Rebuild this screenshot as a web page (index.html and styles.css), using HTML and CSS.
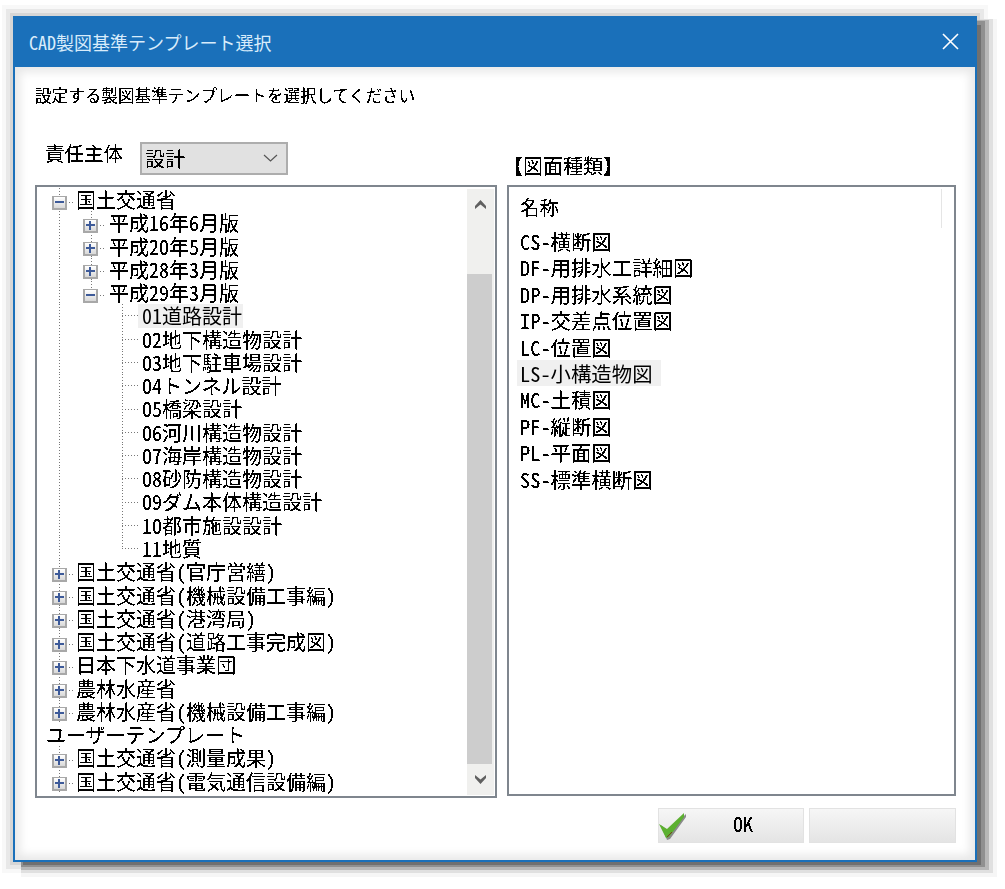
FILE: index.html
```html
<!DOCTYPE html>
<html lang="ja">
<head>
<meta charset="utf-8">
<title>CAD製図基準テンプレート選択</title>
<link rel="stylesheet" href="styles.css">
</head>
<body>
<svg class="defs" width="0" height="0" aria-hidden="true">
  <filter id="crisp" x="0" y="0" width="100%" height="100%" color-interpolation-filters="sRGB">
    <feComponentTransfer>
      <feFuncA type="discrete" tableValues="0 0 1 1 1"/>
    </feComponentTransfer>
  </filter>
</svg>
<div class="dialog">
  <header class="titlebar">
    <span class="title">CAD製図基準テンプレート選択</span>
    <svg class="close" width="17" height="17" viewBox="0 0 17 17"><path d="M1 1L16 16M16 1L1 16" stroke="#fff" stroke-width="1.6" fill="none"/></svg>
  </header>
  <main class="body">
    <p class="prompt crisp">設定する製図基準テンプレートを選択してください</p>
    <div class="columns">
      <section class="col">
        <div class="owner">
          <span class="owner-label crisp">責任主体</span>
          <div class="combo">
            <span class="crisp">設計</span>
            <svg width="15" height="8" viewBox="0 0 15 8"><path d="M1 1L7.5 7L14 1" stroke="#555" stroke-width="1.2" fill="none"/></svg>
          </div>
        </div>
        <div class="tree">
          <div class="tree-rows crisp-rows">
            <div class="row"><span class="cell root"><i class="box minus"></i></span><span class="txt">国土交通省</span></div>
            <div class="row"><span class="cell guide"></span><span class="cell sub"><i class="box plus"></i></span><span class="txt">平成16年6月版</span></div>
            <div class="row"><span class="cell guide"></span><span class="cell sub"><i class="box plus"></i></span><span class="txt">平成20年5月版</span></div>
            <div class="row"><span class="cell guide"></span><span class="cell sub"><i class="box plus"></i></span><span class="txt">平成28年3月版</span></div>
            <div class="row"><span class="cell guide"></span><span class="cell sub sub-last"><i class="box minus"></i></span><span class="txt">平成29年3月版</span></div>
            <div class="row"><span class="cell guide"></span><span class="cell blank"></span><span class="cell leaf"></span><span class="txt sel">01道路設計</span></div>
            <div class="row"><span class="cell guide"></span><span class="cell blank"></span><span class="cell leaf"></span><span class="txt">02地下構造物設計</span></div>
            <div class="row"><span class="cell guide"></span><span class="cell blank"></span><span class="cell leaf"></span><span class="txt">03地下駐車場設計</span></div>
            <div class="row"><span class="cell guide"></span><span class="cell blank"></span><span class="cell leaf"></span><span class="txt">04トンネル設計</span></div>
            <div class="row"><span class="cell guide"></span><span class="cell blank"></span><span class="cell leaf"></span><span class="txt">05橋梁設計</span></div>
            <div class="row"><span class="cell guide"></span><span class="cell blank"></span><span class="cell leaf"></span><span class="txt">06河川構造物設計</span></div>
            <div class="row"><span class="cell guide"></span><span class="cell blank"></span><span class="cell leaf"></span><span class="txt">07海岸構造物設計</span></div>
            <div class="row"><span class="cell guide"></span><span class="cell blank"></span><span class="cell leaf"></span><span class="txt">08砂防構造物設計</span></div>
            <div class="row"><span class="cell guide"></span><span class="cell blank"></span><span class="cell leaf"></span><span class="txt">09ダム本体構造設計</span></div>
            <div class="row"><span class="cell guide"></span><span class="cell blank"></span><span class="cell leaf"></span><span class="txt">10都市施設設計</span></div>
            <div class="row"><span class="cell guide"></span><span class="cell blank"></span><span class="cell leaf leaf-last"></span><span class="txt">11地質</span></div>
            <div class="row"><span class="cell root"><i class="box plus"></i></span><span class="txt">国土交通省（官庁営繕）</span></div>
            <div class="row"><span class="cell root"><i class="box plus"></i></span><span class="txt">国土交通省（機械設備工事編）</span></div>
            <div class="row"><span class="cell root"><i class="box plus"></i></span><span class="txt">国土交通省（港湾局）</span></div>
            <div class="row"><span class="cell root"><i class="box plus"></i></span><span class="txt">国土交通省（道路工事完成図）</span></div>
            <div class="row"><span class="cell root"><i class="box plus"></i></span><span class="txt">日本下水道事業団</span></div>
            <div class="row"><span class="cell root"><i class="box plus"></i></span><span class="txt">農林水産省</span></div>
            <div class="row"><span class="cell root"><i class="box plus"></i></span><span class="txt">農林水産省（機械設備工事編）</span></div>
            <div class="row"><span class="txt user">ユーザーテンプレート</span></div>
            <div class="row"><span class="cell root"><i class="box plus"></i></span><span class="txt">国土交通省（測量成果）</span></div>
            <div class="row"><span class="cell root"><i class="box plus"></i></span><span class="txt">国土交通省（電気通信設備編）</span></div>
          </div>
          <div class="scrollbar">
            <svg class="arrow" width="13" height="11" viewBox="0 0 13 11"><path d="M6.5 1L12 7L12 10L6.5 5.5L1 10L1 7Z" fill="#606060"/></svg>
            <div class="thumb"></div>
            <svg class="arrow" width="13" height="11" viewBox="0 0 13 11"><path d="M6.5 10L12 4L12 1L6.5 5.5L1 1L1 4Z" fill="#606060"/></svg>
          </div>
        </div>
      </section>
      <section class="col right">
        <div class="list-label crisp">【図面種類】</div>
        <div class="list">
          <div class="list-head"><span class="crisp">名称</span></div>
          <div class="items crisp-rows">
            <div class="item"><span class="txt">CS-横断図</span></div>
            <div class="item"><span class="txt">DF-用排水工詳細図</span></div>
            <div class="item"><span class="txt">DP-用排水系統図</span></div>
            <div class="item"><span class="txt">IP-交差点位置図</span></div>
            <div class="item"><span class="txt">LC-位置図</span></div>
            <div class="item"><span class="txt sel">LS-小構造物図</span></div>
            <div class="item"><span class="txt">MC-土積図</span></div>
            <div class="item"><span class="txt">PF-縦断図</span></div>
            <div class="item"><span class="txt">PL-平面図</span></div>
            <div class="item"><span class="txt">SS-標準横断図</span></div>
          </div>
        </div>
      </section>
    </div>
    <footer class="buttons">
      <div class="btn ok">
        <svg class="check" width="29" height="30" viewBox="0 0 29 30">
          <path d="M3 13L10 19L28 2L28 5L12 27L9 28Z" fill="#8a8a8a"/>
          <path d="M1 12L9 17L26 1L26 5L11 25L8 26Z" fill="#5cb030"/>
          <path d="M9 25L14 20" stroke="#7a3a20" stroke-width="1" fill="none"/>
        </svg>
        <span class="crisp ok-label">OK</span>
      </div>
      <div class="btn"></div>
    </footer>
  </main>
</div>
</body>
</html>
```
FILE: styles.css
```css
* { box-sizing: border-box; }
html, body { margin: 0; padding: 0; height: 100%; background: #fff; overflow: hidden; }
body {
  padding: 16px 0 0 13px;
  font-family: "Noto Sans CJK JP", "Noto Sans", sans-serif;
  color: #000;
  font-feature-settings: "hwid";
}
.defs { position: absolute; width: 0; height: 0; }
.crisp, .crisp-rows .txt { filter: url(#crisp); }

.dialog {
  width: 964px;
  height: 846px;
  display: flex;
  flex-direction: column;
  border: solid #1a70ba;
  border-width: 0 2px 2px 2px;
  box-shadow:
    7px 6px 0 -3px #707070,
    8px 5px 0 0 #909090,
    10px 6px 0 2px #b8b8b8,
    0 0 0 3px #d6d6d6,
    12px 7px 0 4px #e0e0e0,
    0 0 0 7px #e8e8e8,
    14px 9px 0 6px #f6f6f6,
    0 0 0 11px #f8f8f8;
}
.titlebar {
  height: 51px;
  flex: none;
  background: #1a70ba;
  display: flex;
  align-items: center;
  justify-content: space-between;
  padding: 0 16px 0 14px;
  color: #d8ecfb;
}
.title { font-size: 18px; line-height: 1; }
.close { flex: none; }

.body {
  flex: 1;
  min-height: 0;
  background: #fff;
  box-shadow: inset 0 0 10px 5px #e8e8e8;
  padding: 15px 19px 0 20px;
  display: flex;
  flex-direction: column;
}
.prompt { margin: 0; font-size: 16.6px; line-height: 26px; }
.columns { flex: none; display: flex; gap: 10px; height: 688px; margin-top: 2px; }
.col { display: flex; flex-direction: column; width: 462px; }
.col.right { width: 449px; }

.owner { display: flex; align-items: center; height: 75px; padding: 27px 0 14px 10px; }
.owner-label { font-size: 19.5px; width: 95px; line-height: 26px; margin-top: -2px; }
.combo {
  width: 148px;
  height: 33px;
  margin-top: 8px;
  background: #e1e1e1;
  border: 2px solid #adadad;
  display: flex;
  align-items: center;
  justify-content: space-between;
  padding: 0 8px 0 3px;
  font-size: 20px;
}

.tree {
  height: 613px;
  border: 2px solid #7f868e;
  display: flex;
  background: #fff;
}
.tree-rows { flex: 1; padding: 1px 0 0 6px; min-width: 0; }
.row { display: flex; align-items: stretch; height: 23.27px; font-size: 20px; line-height: 23px; white-space: nowrap; }
.txt { display: inline-block; padding: 0 1px; height: 100%; }
.txt.sel { background: #f0f0f0; padding: 0 1px 0 4px; margin-left: -3px; }
.txt.user { margin-left: 2px; }

.cell { flex: none; display: flex; align-items: center; }
.root, .guide, .sub {
  background-image: repeating-linear-gradient(to bottom, #777 0 1px, transparent 1px 3px);
  background-size: 1px 100%;
  background-position: 16px 0;
  background-repeat: no-repeat;
}
.root, .guide { width: 32px; }
.sub { width: 33px; }
.sub-last { background-size: 1px 50%; }
.blank { width: 33px; }
.leaf {
  width: 33px;
  background-image:
    repeating-linear-gradient(to bottom, #777 0 1px, transparent 1px 3px),
    repeating-linear-gradient(to right, #777 0 1px, transparent 1px 3px);
  background-size: 1px 100%, 16px 1px;
  background-position: 14px 0, 14px 50%;
  background-repeat: no-repeat;
}
.leaf-last { background-size: 1px 50%, 16px 1px; }

.box {
  position: relative;
  display: block;
  flex: none;
  width: 15px;
  height: 14px;
  margin: 6px 0 0 9px;
  border: 2px solid #a8a8a8;
  border-top-width: 1px;
  border-bottom-width: 2px;
  background: linear-gradient(#fff, #d8d8d8);
}
.sub .box { margin-left: 8px; }
.box::before {
  content: "";
  position: absolute;
  left: 1px; right: 1px; top: 4px;
  height: 2px;
  background: #3d5a99;
}
.plus::after {
  content: "";
  position: absolute;
  top: 1px; bottom: 1px; left: 4px;
  width: 2px;
  background: #3d5a99;
}
.root::after, .sub::after {
  content: "";
  width: 6px;
  height: 1px;
  margin: 5px 0 0 2px;
  background: repeating-linear-gradient(to right, #777 0 1px, transparent 1px 3px);
}

.scrollbar {
  flex: none;
  width: 27px;
  margin: 2px 1px 1px 0;
  background: #f0f0ee;
  display: flex;
  flex-direction: column;
  align-items: center;
  justify-content: space-between;
}
.arrow { flex: none; margin: 10px 0; }
.thumb { flex: 1; align-self: flex-start; width: 25px; background: #cdcdcd; margin: 54px 0 0; }

.list-label { font-size: 20px; height: 75px; padding-top: 43px; margin-left: -4px; line-height: 26px; }
.list { height: 611px; border: 2px solid #7f868e; background: #fff; }
.list-head {
  height: 39px;
  margin: 2px 12px 0 0;
  padding: 3px 0 0 11px;
  border-right: 1px solid #e5e5e5;
  font-size: 19.5px;
  line-height: 30px;
}
.items { padding-left: 8px; }
.item { height: 26.4px; font-size: 20.4px; line-height: 26px; white-space: nowrap; }
.item .txt { padding: 0 3px; }
.item .txt.sel { margin-left: 0; padding: 0 8px 0 3px; }

.buttons { display: flex; justify-content: flex-end; gap: 5px; margin-top: 10px; }
.btn {
  position: relative;
  width: 147px;
  height: 35px;
  border: 1px solid #e2e2e2;
  background: linear-gradient(#f6f6f6, #e4e4e4);
  display: flex;
  align-items: center;
  justify-content: center;
}
.btn.ok { width: 146px; padding-left: 24px; }
.ok-label { font-size: 20px; line-height: 26px; margin-top: -4px; }
.check { position: absolute; left: -1px; top: 3px; }
```
